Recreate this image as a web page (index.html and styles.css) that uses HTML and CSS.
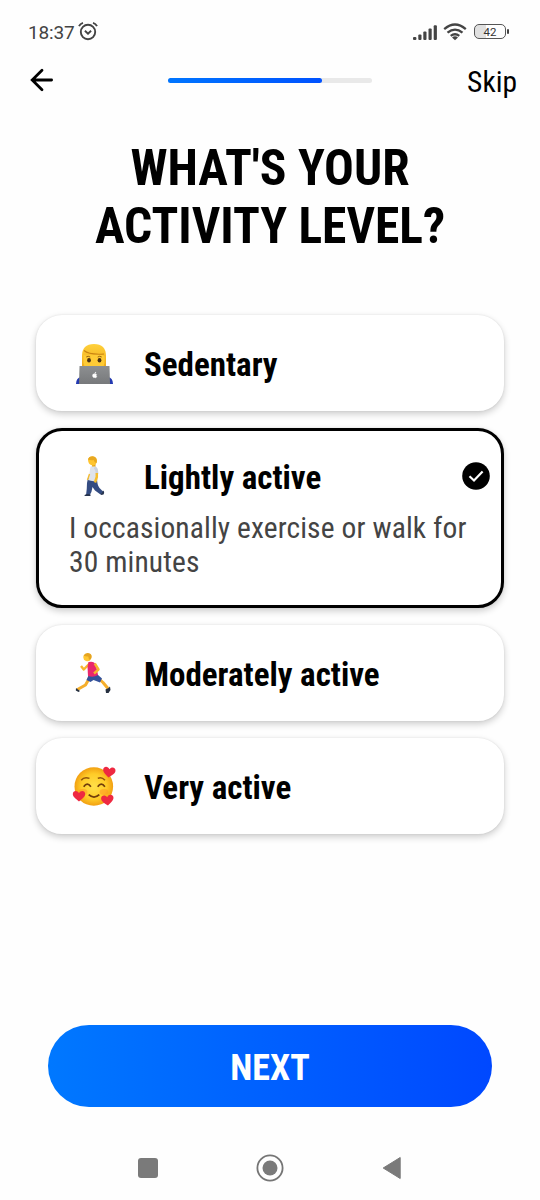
FILE: index.html
```html
<!DOCTYPE html>
<html lang="en">
<head>
<meta charset="utf-8">
<meta name="viewport" content="width=device-width, initial-scale=1">
<title>Activity level</title>
<link rel="stylesheet" href="styles.css">
</head>
<body>
<div class="screen">
  <div class="status">
    <span class="clock">18:37</span>
    <svg class="alarm" width="20" height="20" viewBox="0 0 20 20" fill="none" stroke="#444" stroke-width="1.9"><circle cx="10" cy="11" r="7.2"/><path d="M1 5.2Q2.3 2.6 5 1.8M19 5.2Q17.7 2.6 15 1.8M6.9 9.8L10 12.6 13.1 9.8"/></svg>
    <svg class="signal" width="25" height="17" viewBox="0 0 25 17" fill="#444"><rect x="0" y="13" width="3.4" height="3" rx="1"/><rect x="5.3" y="10.5" width="3.2" height="5.5" rx="1"/><rect x="10.3" y="7.5" width="3.2" height="8.5" rx="1"/><rect x="15.5" y="4.5" width="3.2" height="11.5" rx="1"/><rect x="20.7" y="1.3" width="3.2" height="14.7" rx="1"/></svg>
    <svg class="wifi" width="24" height="18" viewBox="0 0 24 18" fill="none" stroke="#444" stroke-width="2.3"><path d="M1.2 6.1Q12-3.2 22.8 6.1M4.5 9.7Q12 3.5 19.5 9.7M7.7 12.8Q12 9.6 16.3 12.8"/><path d="M9 14.4Q12 12.3 15 14.4L12 17.2Z" fill="#444" stroke="none"/></svg>
    <div class="battery"><span>42</span></div>
    <i class="battery-tip"></i>
  </div>

  <div class="topbar">
    <svg class="back" width="24" height="24" viewBox="0 0 24 24" fill="none" stroke="#000" stroke-width="2.8" stroke-linecap="round"><path d="M21.6 12H3M12 2.2L2.2 12l9.8 9.8"/></svg>
    <div class="progress"><div class="progress-fill"></div></div>
    <span class="skip cond">Skip</span>
  </div>

  <h1 class="title cond">WHAT'S YOUR<br>ACTIVITY LEVEL?</h1>

  <div class="options">
    <div class="card">
      <div class="row">
        <svg class="emoji" viewBox="0 0 44 44">
          <defs>
            <linearGradient id="hair" x2="0" y2="1"><stop stop-color="#ffd13b"/><stop offset="1" stop-color="#efa817"/></linearGradient>
            <linearGradient id="laptop" x2="0" y2="1"><stop stop-color="#8d8f91"/><stop offset="1" stop-color="#77797b"/></linearGradient>
            <radialGradient id="face"><stop stop-color="#ffe04a"/><stop offset=".65" stop-color="#ffcc28"/><stop offset="1" stop-color="#f2a012"/></radialGradient>
            <path id="heart" d="M0 5C-3 2.5-6.2.4-6.2-2.4-6.2-6-1.6-6.5 0-3.2 1.6-6.5 6.2-6 6.2-2.4 6.2.4 3 2.5 0 5Z" fill="#ee2941"/>
          </defs>
          <path d="M4 42Q4 36 9 35H36Q41 36 41 42Z" fill="#2339b0"/>
          <path d="M10 14Q10 2 22 2T34 14V26H10Z" fill="url(#hair)"/>
          <path d="M11.5 13Q19 14.5 27 11.5L32.5 14V21Q32 28 22 28T11.5 21Z" fill="#ffcb35"/>
          <path d="M12 8.5Q17 13 32 12" fill="none" stroke="#c98312" stroke-width="1.1"/>
          <path d="M14.2 15q2-1.4 4 0M25.7 15q2-1.4 4 0" fill="none" stroke="#9a6410"/>
          <ellipse cx="17" cy="18.3" rx="1.9" ry="2.2" fill="#493013"/><ellipse cx="27.5" cy="18.3" rx="1.9" ry="2.2" fill="#493013"/>
          <path d="M7.5 24H37.5L38 42H7Z" fill="url(#laptop)"/>
          <path d="M22.6 31.7q.2-1.2 1.2-1.5 0 1-1.2 1.5Zm0 .5c1-.5 1.7-.2 2 .3-.7.6-.5 1.6.2 1.9-.5 1.5-1.3 1.4-2.2 1.1-1 .4-2-.5-2-2 0-1.3 1-1.8 2-1.3Z" fill="#fff" stroke="#fff" stroke-width=".5"/>
        </svg>
        <span class="label cond">Sedentary</span>
      </div>
    </div>

    <div class="card selected">
      <div class="row">
        <svg class="emoji" viewBox="0 0 44 44">
          <path d="M16 23L25 23Q25 30 27.5 33L31.5 37 28.5 39.5 23 35.5 20.5 32Q20 37 17.5 40.5H14Q15 33 15 28Z" fill="#344c82"/>
          <path d="M12.7 40Q15 38.5 18.5 39.5V41H13Q12 41 12.7 40ZM28.3 38.7Q30.5 38 31 35.5 33 37 31.5 39.5L29.3 40Z" fill="#26334e"/>
          <path d="M18.5 11.5Q24 9.5 25.6 14L25.3 25.5Q21 27 16 25L17.5 18Z" fill="#dfe3eb"/>
          <path d="M17.5 19L16.5 22 15.5 25" fill="none" stroke="#f4bc32" stroke-width="1.4"/>
          <path d="M22.5 12.5Q25.2 14 25 19" fill="none" stroke="#ccd2de" stroke-width="2.6"/>
          <path d="M24.8 18V22L23 27.5" fill="none" stroke="#f6be2f" stroke-width="2.5"/>
          <path d="M20 8H23.5V11.5H20Z" fill="#e7a71d"/>
          <path d="M16 4Q18 .8 22 1.8 26 3.3 24.5 7.8 23.5 11 19.8 10.3 15.8 9.5 16 4Z" fill="#ffc530"/>
          <path d="M16 4.5Q17 1 21 1.3 26 2.4 24.5 8.3 22.5 8 21.7 4.9 19 5.5 16 4.5Z" fill="#e8a820"/>
        </svg>
        <span class="label cond">Lightly active</span>
        <svg class="check" width="28" height="28" viewBox="0 0 28 28"><circle cx="14" cy="14" r="13.8"/><path d="M7.5 14.3L12 18.5 20.6 9.5" fill="none" stroke="#fff" stroke-width="2.2"/></svg>
      </div>
      <p class="desc cond">I occasionally exercise or walk for<br>30 minutes</p>
    </div>

    <div class="card">
      <div class="row">
        <svg class="emoji" viewBox="0 0 44 44">
          <path d="M18 25L13.5 33 5.5 37.5" fill="none" stroke="#f5ae2b" stroke-width="3" stroke-linejoin="round"/>
          <path d="M26 26L31 30.5 36 36.5" fill="none" stroke="#f5ae2b" stroke-width="3" stroke-linejoin="round"/>
          <path d="M16.5 23.5L25.5 22.5 30 26.5 28 30.5 21.5 28 18.5 30 14.5 28Z" fill="#34529b"/>
          <path d="M4 36L8 39 6.5 40 3.8 38.5ZM33.5 37.5L36.5 36 38 34.5 38.5 38 36.5 41H34Z" fill="#263040"/>
          <path d="M18 11L11.8 17.5 9 14" fill="none" stroke="#f7b52e" stroke-width="2.5" stroke-linejoin="round"/>
          <path d="M16.5 10Q22 8.5 24 13L26 23Q21.5 26 16 24L15.5 15Z" fill="#e9276c"/>
          <path d="M22.8 11.5L26.5 17.5 22 21.5" fill="none" stroke="#f7b52e" stroke-width="2.4" stroke-linejoin="round"/>
          <path d="M11.3 4.3Q13 .8 16.7 1.5 20.5 2.5 19 7 17.6 10.3 14 9 11 7.8 11.3 4.3Z" fill="#ffc734"/>
          <path d="M11.5 3.8Q13 .4 17 1.2 21 2.5 19 7L17 7.7 16.3 4.5Q14 4.8 11.5 3.8Z" fill="#e5a421"/>
        </svg>
        <span class="label cond">Moderately active</span>
      </div>
    </div>

    <div class="card">
      <div class="row">
        <svg class="emoji" viewBox="0 0 44 44">
          <circle cx="21.8" cy="21.5" r="19.3" fill="url(#face)"/>
          <path d="M9.2 15.2Q12.2 11.3 17.5 13.4M25.8 13.4Q29.5 11.3 33 15.2" fill="none" stroke="#92540c" stroke-width="1.5"/>
          <path d="M11.7 21.7Q15.2 16.5 18.9 21.7M25.7 21.7Q29.3 16.5 32.9 21.7" fill="none" stroke="#713d0b" stroke-width="1.7"/>
          <ellipse cx="11" cy="27" rx="4.5" ry="3" fill="#ff8424" opacity=".4"/><ellipse cx="32" cy="27" rx="4.5" ry="3" fill="#ff8424" opacity=".4"/>
          <path d="M16.7 29.7Q22 34.5 27.3 29.7" fill="none" stroke="#713d0b" stroke-width="1.8"/>
          <use href="#heart" transform="translate(37 7.5) rotate(8)"/>
          <use href="#heart" transform="translate(7 31.5)"/>
          <use href="#heart" transform="translate(35.5 35.5) rotate(-5)"/>
        </svg>
        <span class="label cond">Very active</span>
      </div>
    </div>
  </div>

  <div class="next cond">NEXT</div>

  <div class="navbar">
    <i class="nav-square"></i>
    <svg width="28" height="28" viewBox="0 0 28 28"><circle cx="14" cy="14" r="12.6" fill="none" stroke="#757575" stroke-width="1.8"/><circle cx="14" cy="14" r="7.5" fill="#7a7a7a"/></svg>
    <svg width="20" height="24" viewBox="0 0 20 24"><path d="M18.2 1.5V22.5L1.2 12Z" fill="#7a7a7a" stroke="#7a7a7a" stroke-linejoin="round"/></svg>
  </div>
</div>
</body>
</html>
```
FILE: styles.css
```css
* { box-sizing: border-box; }
body { margin: 0; background: #fefefe; font-family: Roboto, sans-serif; color: #000; }
.screen { width: 540px; height: 1200px; display: flex; flex-direction: column; overflow: hidden; }
.cond { font-family: "Roboto Condensed", Roboto, sans-serif; font-stretch: 75%; }
svg { display: block; flex: none; }

.status { height: 62px; padding: 2px 31px 0 28px; display: flex; align-items: center; }
.clock { font-size: 19px; color: #444; width: 50px; letter-spacing: -.15px; }
.alarm { margin-top: -2px; }
.signal { margin-left: auto; }
.wifi { margin: -1px 0 0 5px; }
.battery { margin: -1px 0 0 7px; width: 32px; height: 15px; border: 1.5px solid #555; border-radius: 5px; font-size: 11.5px; line-height: 14px; text-align: center; color: #333; background: linear-gradient(90deg, #e0e0e0 38%, #fefefe 38%); }
.battery-tip { width: 2px; height: 5px; margin: -1px 0 0 1px; background: #444; border-radius: 1px; }

.topbar { height: 40px; padding: 0 23px 0 30px; display: flex; align-items: center; }
.back { margin-top: -4px; }
.progress { width: 204px; height: 5px; margin: -3px 0 0 114px; border-radius: 3px; background: #e9e9e9; }
.progress-fill { width: 154px; height: 5px; border-radius: 3px; background: linear-gradient(90deg, #0075ff, #0052ff); }
.skip { margin-left: auto; font-size: 29.5px; }

.title { margin: 37px 0 0; text-align: center; font-size: 49.5px; line-height: 58px; font-weight: 700; }

.options { margin: 60px 36px 0; display: flex; flex-direction: column; gap: 17px; }
.card { height: 96px; border: 3px solid #fff; border-radius: 26px; background: #fff; box-shadow: 0 3px 7px rgba(0,0,0,.2), 0 0 2px rgba(0,0,0,.1); }
.selected { height: 180px; border-color: #000; }
.row { height: 91px; padding: 0 11px 0 33px; display: flex; align-items: center; }
.emoji { width: 44px; height: 44px; margin-top: 1px; }
.label { margin-left: 28px; font-size: 33px; font-weight: 700; line-height: 38px; white-space: nowrap; padding-top: 2px; }
.check { margin: -2px 0 0 auto; }
.desc { margin: -11px 0 0 30px; font-size: 29.5px; letter-spacing: .11px; line-height: 34.4px; color: #444; white-space: nowrap; }

.next { margin: 191px 48px 0; height: 82px; border-radius: 41px; background: linear-gradient(90deg, #0078ff, #0048ff); color: #fff; font-size: 36px; font-weight: 700; line-height: 86px; text-align: center; }

.navbar { margin-top: 47px; height: 28px; padding: 0 138px 0 138px; display: flex; align-items: center; justify-content: space-between; }
.nav-square { width: 20px; height: 20px; border-radius: 3px; background: #7a7a7a; }
```
